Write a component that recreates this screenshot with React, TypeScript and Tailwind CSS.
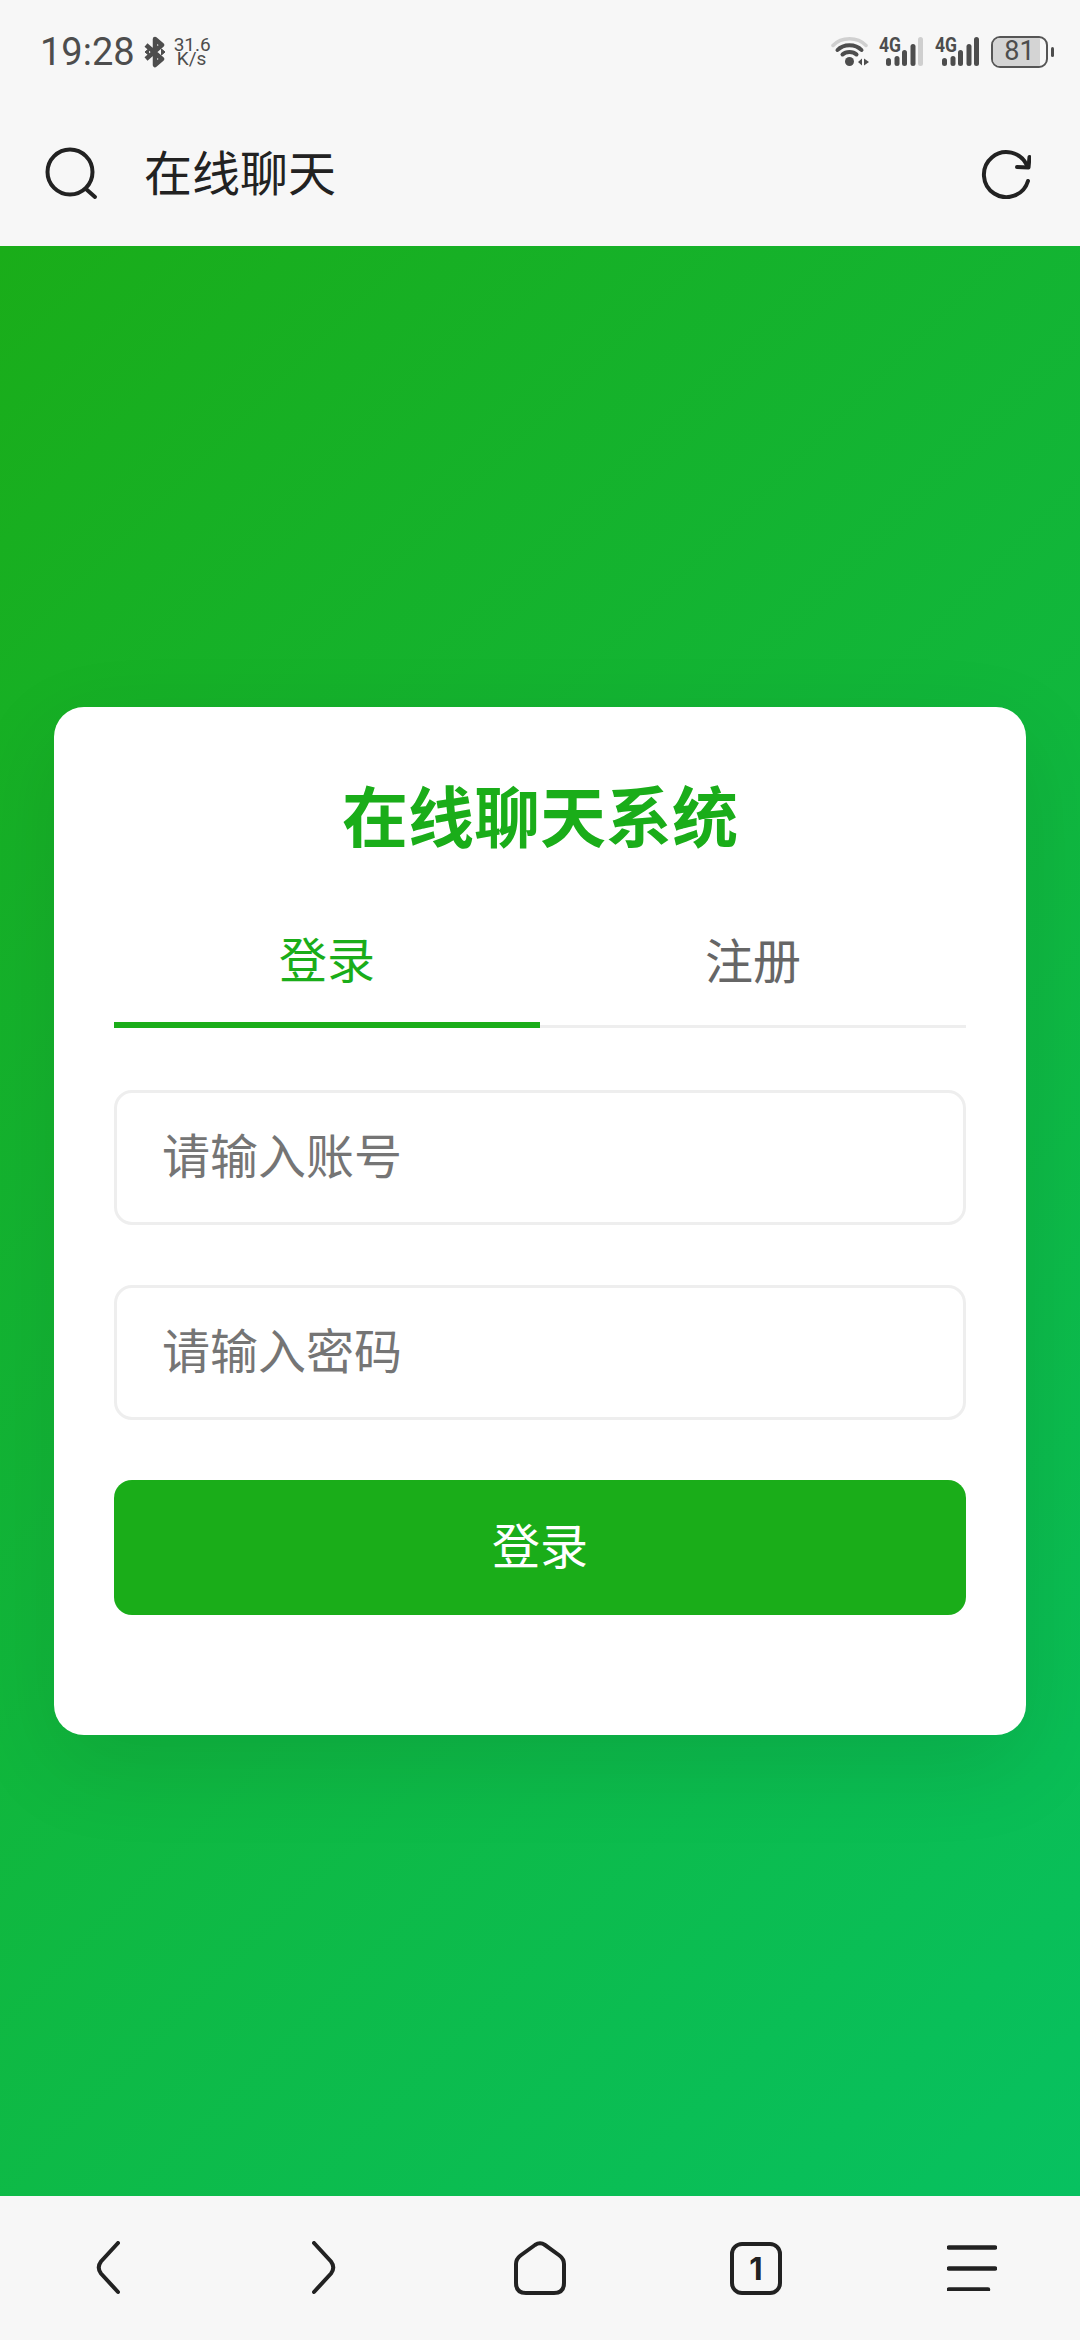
import React from 'react';

const cjk = "font-['Noto_Sans_CJK_SC','Noto_Sans',sans-serif]";

const Bluetooth = () => (
  <svg width="22" height="32" viewBox="0 0 22 32" fill="none" stroke="#4d4d4d" strokeWidth="4.5">
    <path d="M2 9 L18 23 L11 29 V3 L18 9 L2 23" strokeLinejoin="round" />
    <path d="M17.5 13 L21 16 L17.5 19 Z M4.5 13 L1 16 L4.5 19 Z" fill="#4d4d4d" strokeWidth="1" />
  </svg>
);

const Wifi = () => (
  <svg width="38" height="29" viewBox="0 0 38 29" fill="none" strokeLinecap="round">
    <path d="M2 8.5 C10.5 -0.5 26.5 -0.5 35 8.5" stroke="#d0d0d0" strokeWidth="3.5" />
    <path d="M6.5 13 C12.5 6.5 24.5 6.5 30.5 13" stroke="#4d4d4d" strokeWidth="4" />
    <path d="M11.5 17.5 C15 14 22 14 25.5 17.5" stroke="#4d4d4d" strokeWidth="4" />
    <circle cx="18.5" cy="24.5" r="4.5" fill="#4d4d4d" />
    <path d="M31 21.5 V28.5 L27 25 Z M33 21.5 V28.5 L38 25 Z" fill="#4d4d4d" />
  </svg>
);

const Signal = ({ full }: { full: boolean }) => (
  <svg width="44" height="29" viewBox="0 0 44 29" fill="none" className="overflow-visible">
    <text x="0" y="15" fontFamily="Roboto, sans-serif" fontWeight="700" fontSize="20" textLength="22" lengthAdjust="spacingAndGlyphs" fill="#4d4d4d">
      4G
    </text>
    <rect x="7" y="21" width="5" height="8" rx="2.5" fill="#4d4d4d" />
    <rect x="15.5" y="19" width="5" height="10" rx="2.5" fill="#4d4d4d" />
    <rect x="23" y="13" width="5" height="16" rx="2.5" fill="#4d4d4d" />
    <rect x="31.5" y="7" width="5" height="22" rx="2.5" fill="#4d4d4d" />
    <rect x="39" y="0" width="5" height="29" rx="2.5" fill={full ? '#4d4d4d' : '#cfcfcf'} />
  </svg>
);

const Battery = () => (
  <div className="flex items-center gap-[3px]">
    <div className="relative h-[32px] w-[57px] overflow-hidden rounded-[9px] border-[2px] border-[#555555]">
      <div className="h-full w-[47px] bg-[#d4d4d4]" />
      <span className="absolute inset-0 flex items-center justify-center font-[Roboto,sans-serif] text-[27px] leading-none text-[#4d4d4d]">
        81
      </span>
    </div>
    <div className="h-[10px] w-[3px] rounded-full bg-[#4d4d4d]" />
  </div>
);

const StatusBar = () => (
  <div className="flex h-[102px] items-center justify-between pl-[40px] pr-[26px] pt-[1px]">
    <div className="flex items-center">
      <span className="font-[Roboto,sans-serif] text-[38px] leading-none text-[#4d4d4d]">19:28</span>
      <span className="ml-[9px] flex">
        <Bluetooth />
      </span>
      <div className="ml-[8px] w-[36px] text-center font-[Roboto,sans-serif] text-[19px] leading-[14px] text-[#4d4d4d]">
        31.6
        <br />
        K/s
      </div>
    </div>
    <div className="flex items-center gap-[10px]">
      <Wifi />
      <Signal full={false} />
      <span className="ml-[2px] flex">
        <Signal full />
      </span>
      <span className="ml-[2px] flex">
        <Battery />
      </span>
    </div>
  </div>
);

const SearchIcon = () => (
  <svg width="54" height="54" viewBox="0 0 54 54" fill="none" stroke="#222222" strokeWidth="4" strokeLinecap="round">
    <circle cx="25" cy="25" r="22.5" />
    <path d="M41 42 L50 50" />
  </svg>
);

const RefreshIcon = () => (
  <svg width="50" height="50" viewBox="0 0 50 50" fill="none" stroke="#222222" strokeWidth="4" strokeLinecap="round" strokeLinejoin="round">
    <path d="M47 32 A22.5 22.5 0 1 1 46 16.5" />
    <path d="M36 18 L47.5 18.5 L48.5 8" />
  </svg>
);

const Toolbar = () => (
  <div className="flex h-[144px] items-center justify-between pl-[45px] pr-[49px]">
    <div className="flex items-center">
      <SearchIcon />
      <span className={`ml-[45px] pb-[8px] text-[48px] leading-none text-[#222222] ${cjk}`}>在线聊天</span>
    </div>
    <RefreshIcon />
  </div>
);

const Field = ({ placeholder }: { placeholder: string }) => (
  <div className="flex h-[135px] items-center rounded-[18px] border-[3px] border-[#eeeeee] bg-white pb-[9px] pl-[45px]">
    <span className={`text-[48px] leading-none text-[#757575] ${cjk}`}>{placeholder}</span>
  </div>
);

const LoginCard = () => (
  <div className="w-[972px] rounded-[30px] bg-white p-[60px] shadow-[0_30px_90px_rgba(0,0,0,0.1)]">
    <h1 className={`flex h-[100px] items-center justify-center pb-[8px] text-[66px] font-bold leading-none text-[#1aad19] ${cjk}`}>
      在线聊天系统
    </h1>
    <div className="mt-[28px] flex border-b-[3px] border-[#eeeeee]">
      <div className={`-mb-[3px] flex h-[133px] flex-1 items-center justify-center border-b-[6px] border-[#1aad19] pb-[4px] text-[48px] leading-none text-[#1aad19] ${cjk}`}>
        登录
      </div>
      <div className={`flex h-[130px] flex-1 items-center justify-center pb-[4px] text-[48px] leading-none text-[#666666] ${cjk}`}>
        注册
      </div>
    </div>
    <div className="mt-[62px] flex flex-col gap-[60px]">
      <Field placeholder="请输入账号" />
      <Field placeholder="请输入密码" />
      <button className={`mb-[60px] h-[135px] rounded-[18px] bg-[#1aad19] pb-[10px] text-[48px] leading-none text-white ${cjk}`}>
        登录
      </button>
    </div>
  </div>
);

const BackIcon = ({ flip }: { flip?: boolean }) => (
  <svg width="24" height="54" viewBox="0 0 24 54" fill="none" stroke="#222222" strokeWidth="4" strokeLinecap="round" className={flip ? 'scale-x-[-1]' : ''}>
    <path d="M22 2 L5 20.5 Q0.5 26.5 5 32.5 L22 51" />
  </svg>
);

const HomeIcon = () => (
  <svg width="52" height="54" viewBox="0 0 52 54" fill="none" stroke="#222222" strokeWidth="4" strokeLinejoin="round">
    <path d="M21 4 Q26 0.5 31 4 L45.5 14.5 Q50 18 50 23 V42 Q50 52 40 52 H12 Q2 52 2 42 V23 Q2 18 6.5 14.5 Z" />
  </svg>
);

const TabsIcon = () => (
  <div className="flex h-[53px] w-[52px] items-center justify-center rounded-[12px] border-[4px] border-[#222222] font-[Inter,sans-serif] text-[31px] font-bold leading-none text-[#222222]">
    1
  </div>
);

const MenuIcon = () => (
  <svg width="50" height="46" viewBox="0 0 50 46" fill="none" stroke="#222222" strokeWidth="4.5" strokeLinecap="round">
    <path d="M2 2.5 H48 M2 23.5 H48 M2 44.5 H41" />
  </svg>
);

const BottomNav = () => (
  <div className="grid h-[144px] grid-cols-5 items-center justify-items-center bg-[#f7f7f7]">
    <BackIcon />
    <BackIcon flip />
    <HomeIcon />
    <TabsIcon />
    <MenuIcon />
  </div>
);

const App: React.FC = () => {
  return (
    <div className="flex h-[2340px] w-[1080px] flex-col overflow-hidden bg-[#f7f7f7]">
      <StatusBar />
      <Toolbar />
      <main className="flex flex-1 items-center justify-center bg-[linear-gradient(135deg,#1aad19,#07c160)]">
        <LoginCard />
      </main>
      <BottomNav />
    </div>
  );
};

export default App;
